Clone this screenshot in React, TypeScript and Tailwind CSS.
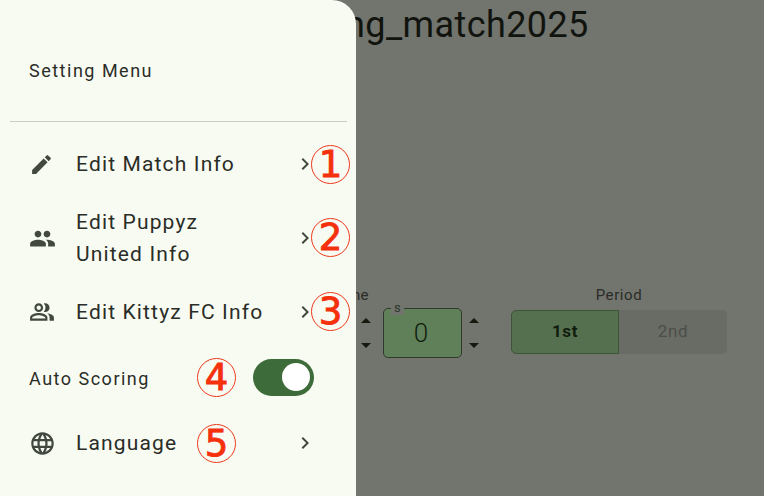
import React from 'react';
import { MdEdit, MdPeople, MdOutlinePeopleAlt, MdLanguage, MdChevronRight, MdArrowDropUp, MdArrowDropDown } from 'react-icons/md';

const font = { fontFamily: 'Roboto, sans-serif' };

const Badge: React.FC<{ n: number; className: string }> = ({ n, className }) => (
  <div
    className={`absolute w-[39px] h-[39px] rounded-full border border-[#ee3a1c] flex items-center justify-center font-['DejaVu_Sans',sans-serif] text-[37px] leading-none text-[#f5300c] [-webkit-text-stroke:0.9px_#f5300c] ${className}`}
  >
    {n}
  </div>
);

const Stepper: React.FC = () => (
  <div className="flex flex-col items-center w-[24px] text-[#17190f]">
    <MdArrowDropUp size={24} />
    <MdArrowDropDown size={24} />
  </div>
);

const MenuRow: React.FC<{ icon: React.ReactNode; height: string; children: React.ReactNode; badge?: React.ReactNode }> = ({
  icon,
  height,
  children,
  badge,
}) => (
  <div className={`relative flex items-center pl-[29px] pr-[39px] ${height}`}>
    <div className="w-[47px] text-[#43483f] shrink-0">{icon}</div>
    <div className="flex-1 text-[21px] leading-[32px] tracking-[1.15px] text-[#2a2d27]">{children}</div>
    <MdChevronRight size={24} className="text-[#43483f]" />
    {badge}
  </div>
);

export default function App() {
  return (
    <div className="relative w-[764px] h-[496px] overflow-hidden bg-[#72746e]" style={font}>
      {/* page behind the scrim */}
      <div className="pl-[356px] text-[#11130e]">
        <div className="h-[50px] text-[36px] leading-[50px] tracking-[0.4px] -ml-[11px]">ng_match2025</div>
        <div className="h-[236px]" />
        <div className="flex items-start">
          <div className="w-[27px]">
            <div className="h-[20px] text-[15px] leading-[18px] text-[#2a2c27] tracking-[0.3px] -ml-[4px]">ne</div>
            <div className="mt-[3px] -ml-[2px]"><Stepper /></div>
          </div>
          <div className="relative mt-[22px] w-[79px] h-[50px] rounded-[5px] border border-[#2f3a2c] bg-[#5f8059] flex items-center justify-center pr-[3px] text-[26px] font-light text-[#11200f]">
            0
            <span className="absolute -top-[8px] left-[7px] px-[3px] text-[13px] leading-[14px] font-normal text-[#2e3a2c] bg-[#72746e]">s</span>
          </div>
          <div className="mt-[23px]"><Stepper /></div>
          <div className="ml-[25px] w-[216px]">
            <div className="h-[24px] text-[15px] leading-[18px] text-center text-[#2a2c27] tracking-[0.6px]">Period</div>
            <div className="flex h-[44px]">
              <div className="w-[108px] rounded-l-[5px] border border-[#3f5339] bg-[#55704f] flex items-center justify-center text-[17px] font-bold tracking-[0.6px] text-[#101c0d]">
                1st
              </div>
              <div className="flex-1 rounded-r-[5px] bg-[#696b65] flex items-center justify-center text-[17px] tracking-[0.6px] text-[#4c4e49]">
                2nd
              </div>
            </div>
          </div>
        </div>
      </div>

      {/* drawer */}
      <div className="absolute left-0 top-0 bottom-0 w-[356px] bg-[#f8fbf2] rounded-tr-[24px]">
        <div className="h-[121px] pl-[29px] pt-[59px] text-[18px] leading-[24px] tracking-[1.5px] text-[#2a2d27]">
          Setting Menu
        </div>
        <div className="ml-[10px] mr-[9px] h-px bg-[#c9cdc3]" />
        <div className="h-[10px]" />
        <MenuRow icon={<MdEdit size={25} />} height="h-[64px]" badge={<Badge n={1} className="left-[311px] top-[13px]" />}>
          Edit Match Info
        </MenuRow>
        <MenuRow icon={<MdPeople size={27} />} height="h-[84px]" badge={<Badge n={2} className="left-[311px] top-[22px]" />}>
          Edit Puppyz
          <br />
          United Info
        </MenuRow>
        <MenuRow icon={<MdOutlinePeopleAlt size={26} />} height="h-[64px]" badge={<Badge n={3} className="left-[311px] top-[12px]" />}>
          Edit Kittyz FC Info
        </MenuRow>
        <div className="relative flex items-center pl-[29px] h-[66px]">
          <div className="flex-1 text-[18px] tracking-[1.5px] text-[#2a2d27] pt-[2px]">Auto Scoring</div>
          <div className="mr-[42px] w-[61px] h-[37px] rounded-full bg-[#3e6b3a] flex items-center justify-end pr-[4px]">
            <div className="w-[28px] h-[28px] rounded-full bg-white" />
          </div>
          <Badge n={4} className="left-[197px] top-[14px]" />
        </div>
        <MenuRow icon={<MdLanguage size={27} />} height="h-[66px]" badge={<Badge n={5} className="left-[197px] top-[14px]" />}>
          Language
        </MenuRow>
      </div>
    </div>
  );
}
